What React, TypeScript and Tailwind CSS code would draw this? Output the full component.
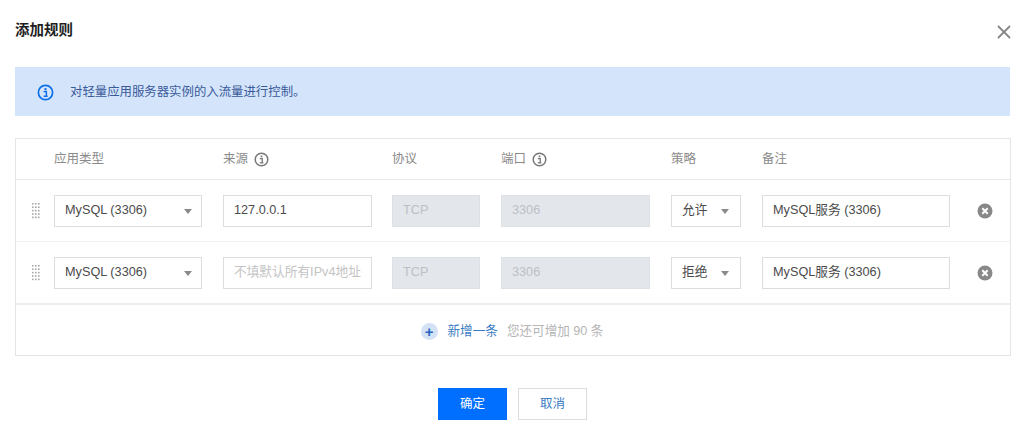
import { X } from "lucide-react";

const font = "font-['Liberation_Sans','Noto_Sans_CJK_SC',sans-serif]";
const grid = "grid grid-cols-[148px_148px_88px_149px_70px_188px] gap-x-[21px] pl-[38px]";

function InfoIcon({ className }: { className?: string }) {
  return (
    <svg viewBox="0 0 16 16" fill="none" className={className}>
      <circle cx="8" cy="8" r="6.7" stroke="currentColor" strokeWidth="1.6" />
      <rect x="7.1" y="3.8" width="1.8" height="1.8" fill="currentColor" />
      <path d="M6.2 7.1h2.6v4.1M6.2 11.6h3.8" stroke="currentColor" strokeWidth="1.4" />
    </svg>
  );
}

function DragHandle() {
  return (
    <svg viewBox="0 0 8 16" className="absolute left-[16px] top-1/2 h-4 w-2 -translate-y-1/2 text-[#a8a8a8]" fill="currentColor">
      {[0, 1, 2, 3, 4].map((r) => (
        <g key={r}>
          <rect x="0" y={r * 3.4} width="1.6" height="1.6" />
          <rect x="3" y={r * 3.4} width="1.6" height="1.6" />
          <rect x="6" y={r * 3.4} width="1.6" height="1.6" />
        </g>
      ))}
    </svg>
  );
}

function RemoveIcon() {
  return (
    <svg viewBox="0 0 16 16" className="absolute right-[17px] top-[23px] h-4 w-4">
      <circle cx="8" cy="8" r="7.5" fill="#888888" />
      <path d="M5.3 5.3l5.4 5.4M10.7 5.3l-5.4 5.4" stroke="#fff" strokeWidth="2" />
    </svg>
  );
}

function Select({ value, narrow }: { value: string; narrow?: boolean }) {
  return (
    <div className={`flex h-8 items-center justify-between border border-[#dddddd] bg-white pl-[10px] text-[12.7px] text-[#4b4b4b] ${narrow ? "pr-[11px]" : "pr-[9px]"}`}>
      <span>{value}</span>
      <span className="h-0 w-0 border-x-[4.5px] border-t-[5px] border-x-transparent border-t-[#8a8a8a]" />
    </div>
  );
}

function Field({ value, placeholder, className }: { value?: string; placeholder?: string; className?: string }) {
  return (
    <div className={`flex h-8 items-center overflow-hidden border border-[#dddddd] bg-white px-[10px] text-[12.7px] whitespace-nowrap ${placeholder ? "text-[#c4c4c4]" : "text-[#4b4b4b]"} ${className ?? ""}`}>
      {value ?? placeholder}
    </div>
  );
}

function Disabled({ value }: { value: string }) {
  return (
    <div className="flex h-8 items-center border border-[#dde1e6] bg-[#e3e7ec] px-[10px] text-[12.7px] text-[#bcc0c5]">
      {value}
    </div>
  );
}

function Row({ source, placeholder, policy, last }: { source?: string; placeholder?: string; policy: string; last?: boolean }) {
  return (
    <div className={`relative ${last ? "border-b-2 border-[#ececec]" : "border-b border-[#f3f3f3]"}`}>
      <div className={`${grid} h-[61px] items-center pt-px`}>
        <Select value="MySQL (3306)" />
        <Field value={source} placeholder={placeholder} className="-mr-px" />
        <Disabled value="TCP" />
        <Disabled value="3306" />
        <Select value={policy} narrow />
        <Field value="MySQL服务 (3306)" />
      </div>
      <DragHandle />
      <RemoveIcon />
    </div>
  );
}

export default function App() {
  return (
    <div className={`${font} h-[433px] w-[1024px] overflow-hidden bg-white px-[15px] pt-[21px]`}>
      <div className="flex h-[18px] items-center justify-between">
        <h2 className="text-[14.5px] leading-[18px] font-bold text-[#1f1f1f]">添加规则</h2>
        <X className="mr-[-6px] mt-[4px] h-[22px] w-[22px] text-[#888888]" strokeWidth={2} />
      </div>

      <div className="mt-[28px] flex h-[49px] w-[995px] items-center gap-[16px] bg-[#d4e5fb] pt-px pl-[22px] text-[12.4px] text-[#3a5a9a]">
        <InfoIcon className="h-[17px] w-[17px] text-[#0a6fe8]" />
        <span>对轻量应用服务器实例的入流量进行控制。</span>
      </div>

      <div className="mt-[22px] h-[218px] w-[996px] border border-[#e5e5e5]">
        <div className={`${grid} h-[41px] items-center border-b border-[#e9e9e9] text-[12.5px] text-[#8a8a8a]`}>
          <span>应用类型</span>
          <span className="flex items-center gap-[6px]">来源 <InfoIcon className="h-[15px] w-[15px] text-[#777777]" /></span>
          <span>协议</span>
          <span className="flex items-center gap-[6px]">端口 <InfoIcon className="h-[15px] w-[15px] text-[#777777]" /></span>
          <span>策略</span>
          <span>备注</span>
        </div>
        <Row source="127.0.0.1" policy="允许" />
        <Row placeholder="不填默认所有IPv4地址" policy="拒绝" last />
        <div className="flex h-[49px] items-center justify-center pt-[3px] pr-[2px] text-[12.6px]">
          <span className="mr-[10px] flex h-[17px] w-[17px] items-center justify-center rounded-full bg-[#d4e2f6] text-[15px] leading-none font-bold text-[#2a66c0]">+</span>
          <span className="mr-[9px] text-[#3b7cc4]">新增一条</span>
          <span className="text-[#b5b5b5]">您还可增加 90 条</span>
        </div>
      </div>

      <div className="mt-[32px] flex justify-center gap-[11px] pl-[1px]">
        <button className="h-8 w-[69px] bg-[#006eff] text-[12.5px] text-white">确定</button>
        <button className="h-8 w-[69px] border border-[#dddddd] bg-white text-[12.5px] text-[#3b7cc4]">取消</button>
      </div>
    </div>
  );
}
